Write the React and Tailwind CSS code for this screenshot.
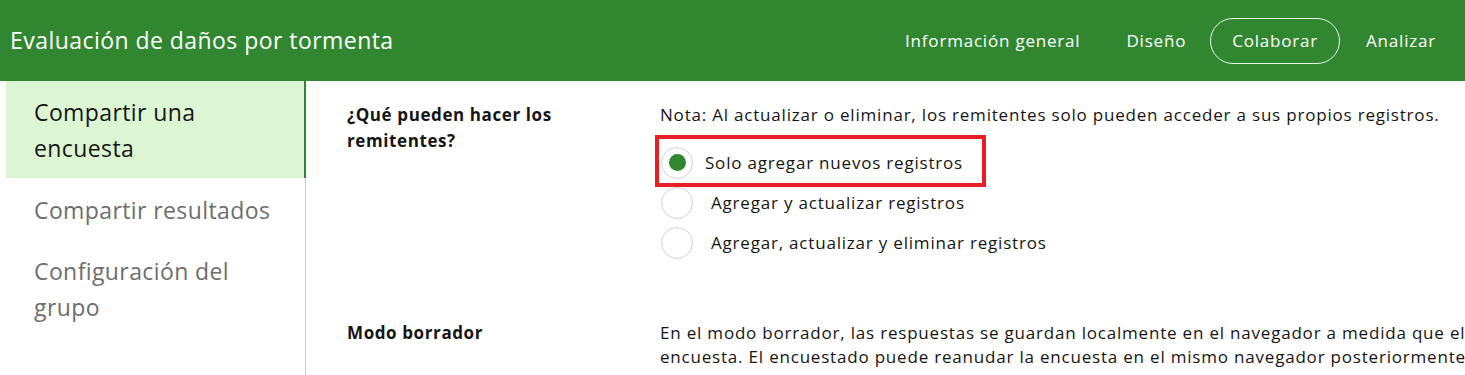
import React from 'react';

const Radio = ({ checked }) => (
    <span className="w-[32px] h-[32px] rounded-full border border-[#d4d4d4] bg-white flex items-center justify-center shrink-0">
        {checked && <span className="w-[17px] h-[17px] rounded-full bg-[#31872f]"></span>}
    </span>
);

export default function App() {
    return (
        <div className="w-[1465px] h-[375px] overflow-hidden bg-white font-['Open_Sans',sans-serif]">
            {/* Header */}
            <div className="h-[81px] bg-[#31872f] flex items-center justify-between pl-[10px] pr-[29px] text-white">
                <h1 className="text-[23px] font-normal tracking-[0.45px]">Evaluación de daños por tormenta</h1>
                <nav className="flex items-center text-[17px] tracking-[0.8px]">
                    <span className="mr-[46px]">Información general</span>
                    <span className="mr-[24px]">Diseño</span>
                    <span className="h-[46px] px-[21px] rounded-full border border-white/90 flex items-center mr-[26px]">Colaborar</span>
                    <span>Analizar</span>
                </nav>
            </div>

            <div className="flex h-[294px]">
                {/* Sidebar */}
                <aside className="w-[306px] pl-[6px] shrink-0">
                    <div className="h-full border-r border-[#cccccc] flex flex-col text-[23px] leading-[36px] tracking-[0.4px]">
                        <div className="bg-[#dcf6d3] border-r-2 border-[#31872f] -mr-[1px] h-[97px] pl-[28px] pt-[13px] text-[#151515]">
                            Compartir una<br />encuesta
                        </div>
                        <div className="pl-[28px] pt-[14px] text-[#6e6e6e]">Compartir resultados</div>
                        <div className="pl-[28px] pt-[25px] text-[#6e6e6e]">Configuración del<br />grupo</div>
                    </div>
                </aside>

                {/* Content */}
                <main className="flex-1 pl-[41px] pt-[21px] text-[17px] tracking-[0.8px] text-[#151515]">
                    <div className="flex">
                        <div className="w-[313px] shrink-0 font-bold leading-[26px] tracking-[0.6px]">¿Qué pueden hacer los<br />remitentes?</div>
                        <div>
                            <p className="leading-[26px] whitespace-nowrap">Nota: Al actualizar o eliminar, los remitentes solo pueden acceder a sus propios registros.</p>
                            <div className="relative mt-[14px] flex flex-col">
                                <label className="h-[41px] flex items-center pl-[1px] gap-[12px]">
                                    <Radio checked />
                                    <span>Solo agregar nuevos registros</span>
                                </label>
                                <label className="h-[40px] flex items-center pl-[1px] gap-[18px]">
                                    <Radio />
                                    <span>Agregar y actualizar registros</span>
                                </label>
                                <label className="h-[40px] flex items-center pl-[1px] gap-[18px]">
                                    <Radio />
                                    <span>Agregar, actualizar y eliminar registros</span>
                                </label>
                                {/* annotation highlight */}
                                <div className="absolute left-[-5px] top-[-7px] w-[331px] h-[52px] border-4 border-[#e81e25] pointer-events-none"></div>
                            </div>
                        </div>
                    </div>
                    <div className="flex mt-[58px]">
                        <div className="w-[313px] shrink-0 font-bold leading-[24px] tracking-[0.6px]">Modo borrador</div>
                        <p className="leading-[24px] whitespace-nowrap">
                            En el modo borrador, las respuestas se guardan localmente en el navegador a medida que el encuestado completa la<br />
                            encuesta. El encuestado puede reanudar la encuesta en el mismo navegador posteriormente.
                        </p>
                    </div>
                </main>
            </div>
        </div>
    );
}
